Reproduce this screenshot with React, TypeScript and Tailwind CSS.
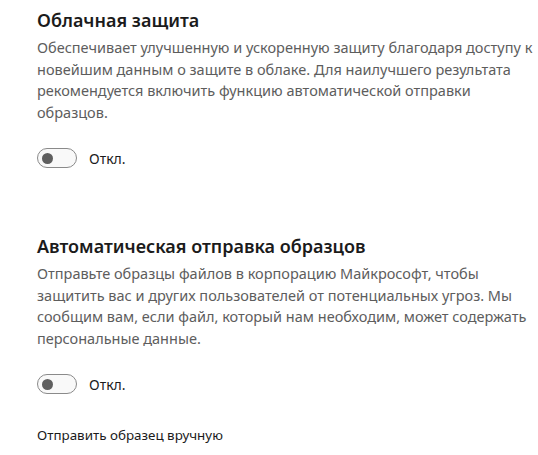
type Section = {
  title: string;
  text: string;
};

const sections: Section[] = [
  {
    title: "Облачная защита",
    text: "Обеспечивает улучшенную и ускоренную защиту благодаря доступу к новейшим данным о защите в облаке. Для наилучшего результата рекомендуется включить функцию автоматической отправки образцов.",
  },
  {
    title: "Автоматическая отправка образцов",
    text: "Отправьте образцы файлов в корпорацию Майкрософт, чтобы защитить вас и других пользователей от потенциальных угроз. Мы сообщим вам, если файл, который нам необходим, может содержать персональные данные.",
  },
];

function Toggle() {
  return (
    <div className="flex items-center gap-3">
      <div className="flex h-[20px] w-[40px] items-center rounded-full border border-[#8a8a8a] bg-[#f9f9f9] px-[4px]">
        <div className="h-[11px] w-[11px] rounded-full bg-[#5f5f5f]" />
      </div>
      <span className="text-[14px] text-[#1b1b1b]">Откл.</span>
    </div>
  );
}

export default function App() {
  return (
    <div className="min-h-[455px] bg-white pl-[37px] pt-[6px] font-['Noto_Sans',sans-serif]">
      {sections.map((s, i) => (
        <div key={i} className={i > 0 ? "mt-[63px]" : ""}>
          <h2 className="text-[18px] font-semibold leading-[28px] text-[#1b1b1b]">
            {s.title}
          </h2>
          <p className="mt-[3px] w-[498px] text-[14.5px] leading-[21.7px] text-[#5d5d5d]">
            {s.text}
          </p>
          <div className="mt-[24px]">
            <Toggle />
          </div>
        </div>
      ))}
      <button className="mt-[30px] text-[13.4px] text-[#1b1b1b]">
        Отправить образец вручную
      </button>
    </div>
  );
}
